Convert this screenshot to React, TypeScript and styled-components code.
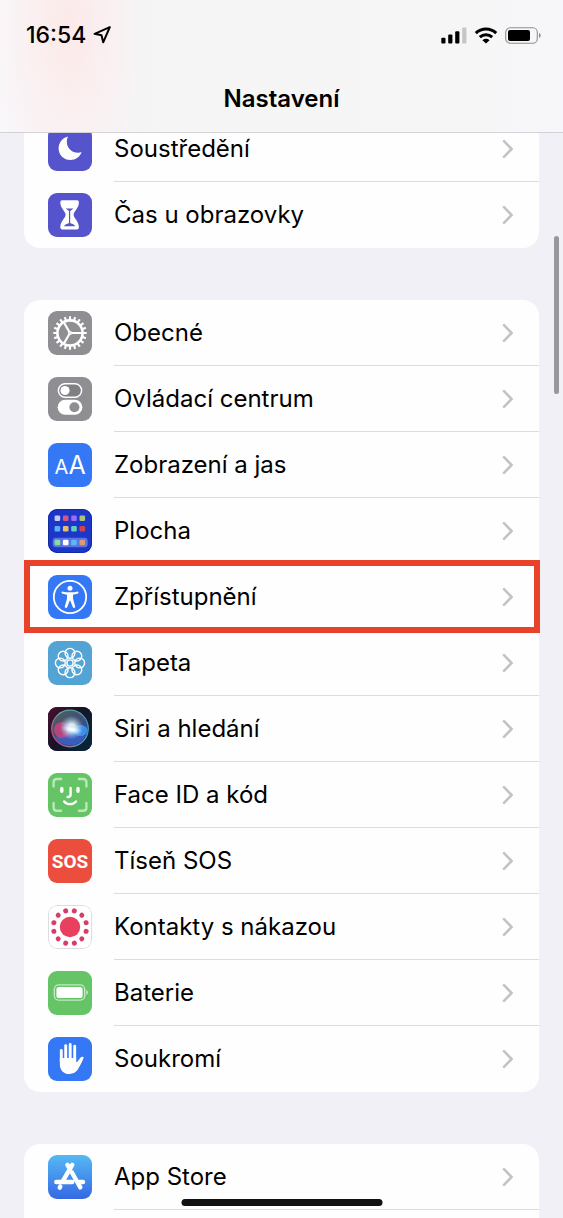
import React from 'react';
import styled, { createGlobalStyle } from 'styled-components';

const GlobalStyle = createGlobalStyle`
  * { box-sizing: border-box; }
  body { margin: 0; background: #f1f0f6; font-family: Inter, "Noto Sans", sans-serif; color: #000; }
`;

const Screen = styled.div`
  position: relative;
  height: 100vh;
  overflow: hidden;
  display: flex;
  flex-direction: column;
  background: #f1f0f6;
`;

const Header = styled.header`
  position: relative;
  z-index: 2;
  flex: none;
  border-bottom: 1px solid #d3d2d8;
  background:
    radial-gradient(ellipse 76px 170px at 68px 30px, #fce9e8 0, rgba(252, 236, 236, 0.6) 50%, rgba(250, 240, 241, 0) 100%),
    linear-gradient(90deg, #f9f7fa 0, #f6f4f6 120px, #f5f5f5 160px, #f6f6f6 80%, #f7f6fa 100%);
`;

const StatusBar = styled.div`
  display: flex;
  align-items: center;
  justify-content: space-between;
  height: 70px;
  padding: 0 21px 0 26px;
`;

const StatusGroup = styled.div`
  display: flex;
  align-items: center;
  gap: 7px;
`;

const Time = styled.span`
  font-size: 23px;
  line-height: 28px;
  font-weight: 500;
`;

const Title = styled.h1`
  margin: 0;
  padding: 13px 0 17px;
  font-size: 24px;
  line-height: 32px;
  font-weight: 600;
  text-align: center;
`;

const Content = styled.main`
  flex: none;
  display: flex;
  flex-direction: column;
  gap: 52px;
  margin-top: -17px;
  padding: 0 24px;
`;

const Card = styled.ul<{ $continues: boolean }>`
  list-style: none;
  margin: 0;
  padding: 0 0 ${(p) => (p.$continues ? 66 : 0)}px;
  border-radius: 16px;
  background: #fefefe;
`;

const Item = styled.li<{ $marked?: boolean }>`
  position: relative;
  ${(p) =>
    p.$marked &&
    `&::after {
      content: "";
      position: absolute;
      z-index: 1;
      inset: -4px -1px -3px 0;
      border: 6px solid #e8432a;
      pointer-events: none;
    }`}
`;

const RowLink = styled.a`
  display: flex;
  align-items: center;
  gap: 22px;
  height: 66px;
  padding-left: 24px;
  color: inherit;
  text-decoration: none;
`;

const RowBody = styled.span<{ $line: boolean }>`
  flex: 1;
  align-self: stretch;
  display: flex;
  align-items: center;
  justify-content: space-between;
  padding-right: 25px;
  border-bottom: 1px solid ${(p) => (p.$line ? '#dcdcdf' : 'transparent')};
`;

const Label = styled.span`
  padding-top: 1px;
  font-size: 24px;
  line-height: 32px;
  font-weight: 400;
`;

const IconTile = styled.svg`
  flex: none;
  display: block;
  width: 44px;
  height: 44px;
  border-radius: 9px;
`;

const Glyph = styled.svg`
  display: block;
  flex: none;
`;

const ScrollThumb = styled.div`
  position: absolute;
  z-index: 3;
  top: 236px;
  right: 4px;
  width: 5px;
  height: 158px;
  border-radius: 3px;
  background: #98979d;
`;

const HomeIndicator = styled.div`
  position: absolute;
  z-index: 3;
  bottom: 12px;
  left: 50%;
  width: 201px;
  height: 7px;
  border-radius: 4px;
  background: #111;
  transform: translateX(-50%);
`;

const Tile = ({ fill, children }: { fill: string; children: React.ReactNode }) => (
  <IconTile viewBox="0 0 44 44" aria-hidden="true">
    <rect width="44" height="44" fill={fill} />
    {children}
  </IconTile>
);

const around = (count: number, offset = 0) =>
  Array.from({ length: count }, (_, i) => offset + (i * 360) / count);

const icons: Record<string, React.ReactNode> = {
  moon: (
    <Tile fill="#5654cd">
      <path d="M20 9.6C19.2 11.2 18.8 13 18.8 14.8C18.8 21 23.8 25.8 30 25.8C31.4 25.8 32.6 25.5 33.6 25C32 29.8 27.6 33 22.4 33C15.9 33 10.6 27.8 10.6 21.4C10.6 15.9 14.6 10.9 20 9.6Z" fill="#fff" />
    </Tile>
  ),
  hourglass: (
    <Tile fill="#5654cd">
      <path d="M14 7.3H29.2Q30.9 7.3 30.9 9C30.9 16 25.6 18 25.6 21.8C25.6 25.6 30.9 27.6 30.9 34.6Q30.9 36.4 29.2 36.4H14Q12.3 36.4 12.3 34.6C12.3 27.6 17.6 25.6 17.6 21.8C17.6 18 12.3 16 12.3 9Q12.3 7.3 14 7.3Z" fill="#fff" />
      <path d="M17.6 15.4H25.6L22.2 17.9V30C24.2 31 26.6 31.6 27.3 33.2H15.9C16.6 31.6 19 31 21 30V17.9Z" fill="#5654cd" />
    </Tile>
  ),
  gear: (
    <Tile fill="#8e8e93">
      <g stroke="#fff" fill="none">
        <circle cx="22" cy="22" r="12.6" strokeWidth="2.6" />
        {around(20).map((a) => (
          <path key={a} d="M22 9.5V5.3" strokeWidth="2.1" transform={`rotate(${a} 22 22)`} />
        ))}
        {around(3, 90).map((a) => (
          <path key={a} d="M22 20.5V10" strokeWidth="2.1" transform={`rotate(${a} 22 22)`} />
        ))}
        <circle cx="22" cy="22" r="1.3" strokeWidth="1.6" />
      </g>
    </Tile>
  ),
  toggles: (
    <Tile fill="#8e8e93">
      <rect x="10.4" y="6.8" width="23.2" height="13.4" rx="6.7" fill="#7f7f84" stroke="#fff" strokeWidth="1.5" />
      <circle cx="17" cy="13.5" r="4.6" fill="#fff" />
      <rect x="9.6" y="22.8" width="24.8" height="15" rx="7.5" fill="#fff" />
      <circle cx="26.4" cy="30.3" r="5" fill="#8e8e93" />
    </Tile>
  ),
  text: (
    <Tile fill="#3478f6">
      <g fill="#fff" fontFamily="Inter, sans-serif" fontWeight="400" textAnchor="middle">
        <text x="13.3" y="31" fontSize="20">A</text>
        <text x="29" y="31" fontSize="25">A</text>
      </g>
    </Tile>
  ),
  home: (
    <Tile fill="#1c36c8">
      <rect x="0.5" y="0.5" width="43" height="43" rx="9" fill="none" stroke="#1429a4" />
      <rect x="4.7" y="28.8" width="35" height="9.4" rx="3" fill="#5c74e0" />
      {[
        ['#cbc9f1', '#d1568c', '#9a6cf8', '#a9c47a'],
        ['#5ab0f7', '#e6bb6c', '#63cdb8', '#cf4450'],
        ['#86e091', '#ffffff', '#5ab9f5', '#dd9a78'],
      ].map((row, r) =>
        row.map((c, i) => (
          <rect key={c} x={6.6 + i * 8.3} y={[6.4, 17, 30.7][r]} width="5.6" height="5.6" rx="1.3" fill={c} />
        )),
      )}
    </Tile>
  ),
  person: (
    <Tile fill="#3478f6">
      <circle cx="22" cy="22" r="16.2" fill="none" stroke="#fff" strokeWidth="1.8" />
      <circle cx="22" cy="13.2" r="2.5" fill="#fff" />
      <path d="M14 16.4C19 17.6 25 17.6 30 16.4Q31.2 17.6 30 18.4L25 19.7V23.5L27.3 32Q26.2 33.6 25 32.6L22.2 25.6H21.8L19 32.6Q17.8 33.6 16.7 32L19 23.5V19.7L14 18.4Q12.8 17.6 14 16.4Z" fill="#fff" />
    </Tile>
  ),
  flower: (
    <Tile fill="#54a3d5">
      <g fill="none" stroke="#fff" strokeWidth="1.4">
        {around(8).map((a) => (
          <circle key={a} cx="22" cy="12.3" r="4.9" transform={`rotate(${a} 22 22)`} />
        ))}
        <circle cx="22" cy="22" r="3.1" />
      </g>
    </Tile>
  ),
  siri: (
    <Tile fill="#15111f">
      <defs>
        <linearGradient id="siriEdge" x1="0" y1="0" x2="1" y2="0.7">
          <stop offset="0" stopColor="#4a1030" />
          <stop offset="0.5" stopColor="#171326" />
          <stop offset="1" stopColor="#08243a" />
        </linearGradient>
        <linearGradient id="siriOrb" x1="0.1" y1="0.1" x2="0.9" y2="0.9">
          <stop offset="0" stopColor="#4a5f66" />
          <stop offset="0.45" stopColor="#46506e" />
          <stop offset="1" stopColor="#1d4fb0" />
        </linearGradient>
        <linearGradient id="siriRing" x1="0" y1="0.8" x2="1" y2="0.2">
          <stop offset="0" stopColor="#d0408d" />
          <stop offset="0.45" stopColor="#71a59e" />
          <stop offset="1" stopColor="#3d9fb0" />
        </linearGradient>
        <radialGradient id="siriGlow">
          <stop offset="0" stopColor="#fff" />
          <stop offset="0.3" stopColor="#f0faff" stopOpacity="0.9" />
          <stop offset="1" stopColor="#8fc9f0" stopOpacity="0" />
        </radialGradient>
      </defs>
      <rect width="44" height="44" fill="url(#siriEdge)" />
      <circle cx="22" cy="21.5" r="18.3" fill="url(#siriOrb)" stroke="url(#siriRing)" strokeWidth="1.2" />
      <path d="M7 30C14 28 19 23 24 23C28 23 32 28 37 29C33 37 25 39 20 38C14 37 10 35 7 30Z" fill="#3f62cf" fillOpacity="0.7" />
      <ellipse cx="14" cy="23" rx="8" ry="8" fill="#dd3f80" fillOpacity="0.75" />
      <ellipse cx="32.5" cy="23.5" rx="7" ry="5.6" fill="#3f93ee" fillOpacity="0.9" />
      <ellipse cx="23.5" cy="20.5" rx="12" ry="12" fill="url(#siriGlow)" />
      <ellipse cx="24" cy="22.5" rx="11" ry="4.6" fill="url(#siriGlow)" transform="rotate(12 24 22)" />
    </Tile>
  ),
  face: (
    <Tile fill="#65c466">
      <g fill="none" strokeLinecap="round">
        <path d="M5.6 13.5V9.3Q5.6 6 8.9 6H13M31 6H35.1Q38.4 6 38.4 9.3V13.5M38.4 30V34.4Q38.4 37.7 35.1 37.7H31M13 37.7H8.9Q5.6 37.7 5.6 34.4V30" stroke="#bce7b8" strokeWidth="2.4" />
        <path d="M13.8 15.4V18.3M30 15.4V18.3" stroke="#fff" strokeWidth="3.4" />
        <path d="M22.6 15V21.8Q22.6 24 19.6 24M16.2 28.4C19 32 25 32 28 28.4" stroke="#fff" strokeWidth="2.4" />
      </g>
    </Tile>
  ),
  sos: (
    <Tile fill="#eb4e3d">
      <text x="22" y="29" fill="#fff" fontFamily="Roboto, sans-serif" fontWeight="700" fontSize="19" textAnchor="middle">SOS</text>
    </Tile>
  ),
  exposure: (
    <Tile fill="#fff">
      <rect x="0.5" y="0.5" width="43" height="43" rx="8.5" fill="none" stroke="#dddde1" />
      <circle cx="22" cy="22" r="10.2" fill="#ea4060" />
      {around(12, 15).map((a) => (
        <circle key={a} cx="22" cy="5.3" r="2.5" fill="#d83c68" transform={`rotate(${a} 22 22)`} />
      ))}
    </Tile>
  ),
  battery: (
    <Tile fill="#65c466">
      <rect x="6.3" y="13.9" width="30.4" height="15.2" rx="4.4" fill="none" stroke="#c2e9c0" strokeWidth="1.4" />
      <rect x="8.4" y="16" width="26.2" height="11" rx="2.6" fill="#fff" />
      <path d="M38.2 19V24Q40 23.4 40 21.5Q40 19.6 38.2 19Z" fill="#c2e9c0" />
    </Tile>
  ),
  hand: (
    <Tile fill="#3478f6">
      <path d="M13.3 13.4V25M17.7 8.6V24M22.2 7.4V24M26.7 9.2V25" stroke="#fff" strokeWidth="2.9" strokeLinecap="round" />
      <path d="M11.85 21H28.15V25.6C29.6 25 31.2 22.4 32.4 20.8C33.4 19.4 36.2 19.4 35.5 21.3C34 25 31.6 29.8 29.8 32.6C28 35.4 25.3 37 21.6 37C15.6 37 11.85 33 11.85 27.4Z" fill="#fff" />
    </Tile>
  ),
  store: (
    <IconTile viewBox="0 0 44 44" aria-hidden="true">
      <defs>
        <linearGradient id="storeSky" x1="0" y1="0" x2="0" y2="1">
          <stop offset="0" stopColor="#55b9f4" />
          <stop offset="1" stopColor="#3568e4" />
        </linearGradient>
      </defs>
      <rect width="44" height="44" fill="url(#storeSky)" />
      <path d="M24.3 9.8L15.2 25.4M12.3 31.6L11.7 32.6M19.4 9.8L20.8 12.2M23.8 17.2L32.3 32.4M8.3 27H24.2M31.2 27H35" fill="none" stroke="#fff" strokeWidth="4.4" strokeLinecap="round" />
    </IconTile>
  ),
};

const LocationArrow = () => (
  <Glyph width="18" height="18" viewBox="0 0 18 18" aria-hidden="true">
    <path d="M16.8 1.2L1.6 7.8L8.5 9.3L10.2 16.3Z" fill="none" stroke="#000" strokeWidth="2" strokeLinejoin="round" />
  </Glyph>
);

const Signal = () => (
  <Glyph width="26" height="17" viewBox="0 0 26 17" aria-hidden="true">
    <rect x="0.3" y="10.8" width="4.2" height="5.7" rx="1" />
    <rect x="7.2" y="7.6" width="4.2" height="8.9" rx="1" />
    <rect x="14.2" y="4.3" width="4.2" height="12.2" rx="1" />
    <rect x="21.2" y="0.6" width="4.2" height="15.9" rx="1" fill="#c6c6c8" />
  </Glyph>
);

const Wifi = () => (
  <Glyph width="24" height="17" viewBox="0 0 24 17" aria-hidden="true">
    <g fill="none" stroke="#000" strokeWidth="3">
      <path d="M1.8 6.1C7.6 0.5 16.4 0.5 22.2 6.1" />
      <path d="M5.8 10.2C9.4 6.8 14.6 6.8 18.2 10.2" />
    </g>
    <path d="M12 16.6L8.4 13.2Q12 10.5 15.6 13.2Z" />
  </Glyph>
);

const StatusBattery = () => (
  <Glyph width="37" height="17" viewBox="0 0 37 17" aria-hidden="true">
    <rect x="0.7" y="0.7" width="31.6" height="15.6" rx="4.6" fill="none" stroke="#8f8f91" strokeWidth="1.1" />
    <rect x="3" y="3" width="22" height="11" rx="2" />
    <path d="M34 6V11Q35.8 10.4 35.8 8.5Q35.8 6.6 34 6Z" fill="#8f8f91" />
  </Glyph>
);

const Chevron = () => (
  <Glyph width="12" height="20" viewBox="0 0 12 20" aria-hidden="true">
    <path d="M2 2.2L9.6 10L2 17.8" fill="none" stroke="#c3c3c6" strokeWidth="2.6" strokeLinecap="round" strokeLinejoin="round" />
  </Glyph>
);

type Entry = { icon: string; label: string; marked?: boolean };

const groups: { entries: Entry[]; continues?: boolean }[] = [
  {
    entries: [
      { icon: 'moon', label: 'Soustředění' },
      { icon: 'hourglass', label: 'Čas u obrazovky' },
    ],
  },
  {
    entries: [
      { icon: 'gear', label: 'Obecné' },
      { icon: 'toggles', label: 'Ovládací centrum' },
      { icon: 'text', label: 'Zobrazení a jas' },
      { icon: 'home', label: 'Plocha' },
      { icon: 'person', label: 'Zpřístupnění', marked: true },
      { icon: 'flower', label: 'Tapeta' },
      { icon: 'siri', label: 'Siri a hledání' },
      { icon: 'face', label: 'Face ID a kód' },
      { icon: 'sos', label: 'Tíseň SOS' },
      { icon: 'exposure', label: 'Kontakty s nákazou' },
      { icon: 'battery', label: 'Baterie' },
      { icon: 'hand', label: 'Soukromí' },
    ],
  },
  { entries: [{ icon: 'store', label: 'App Store' }], continues: true },
];

export default function App() {
  return (
    <Screen>
      <GlobalStyle />
      <Header>
        <StatusBar>
          <StatusGroup>
            <Time>16:54</Time>
            <LocationArrow />
          </StatusGroup>
          <StatusGroup>
            <Signal />
            <Wifi />
            <StatusBattery />
          </StatusGroup>
        </StatusBar>
        <Title>Nastavení</Title>
      </Header>
      <Content>
        {groups.map((group, g) => (
          <Card key={g} $continues={!!group.continues}>
            {group.entries.map((entry, i) => (
              <Item key={entry.icon} $marked={entry.marked}>
                <RowLink href={`#${entry.icon}`}>
                  {icons[entry.icon]}
                  <RowBody $line={!!group.continues || i < group.entries.length - 1}>
                    <Label>{entry.label}</Label>
                    <Chevron />
                  </RowBody>
                </RowLink>
              </Item>
            ))}
          </Card>
        ))}
      </Content>
      <ScrollThumb />
      <HomeIndicator />
    </Screen>
  );
}
